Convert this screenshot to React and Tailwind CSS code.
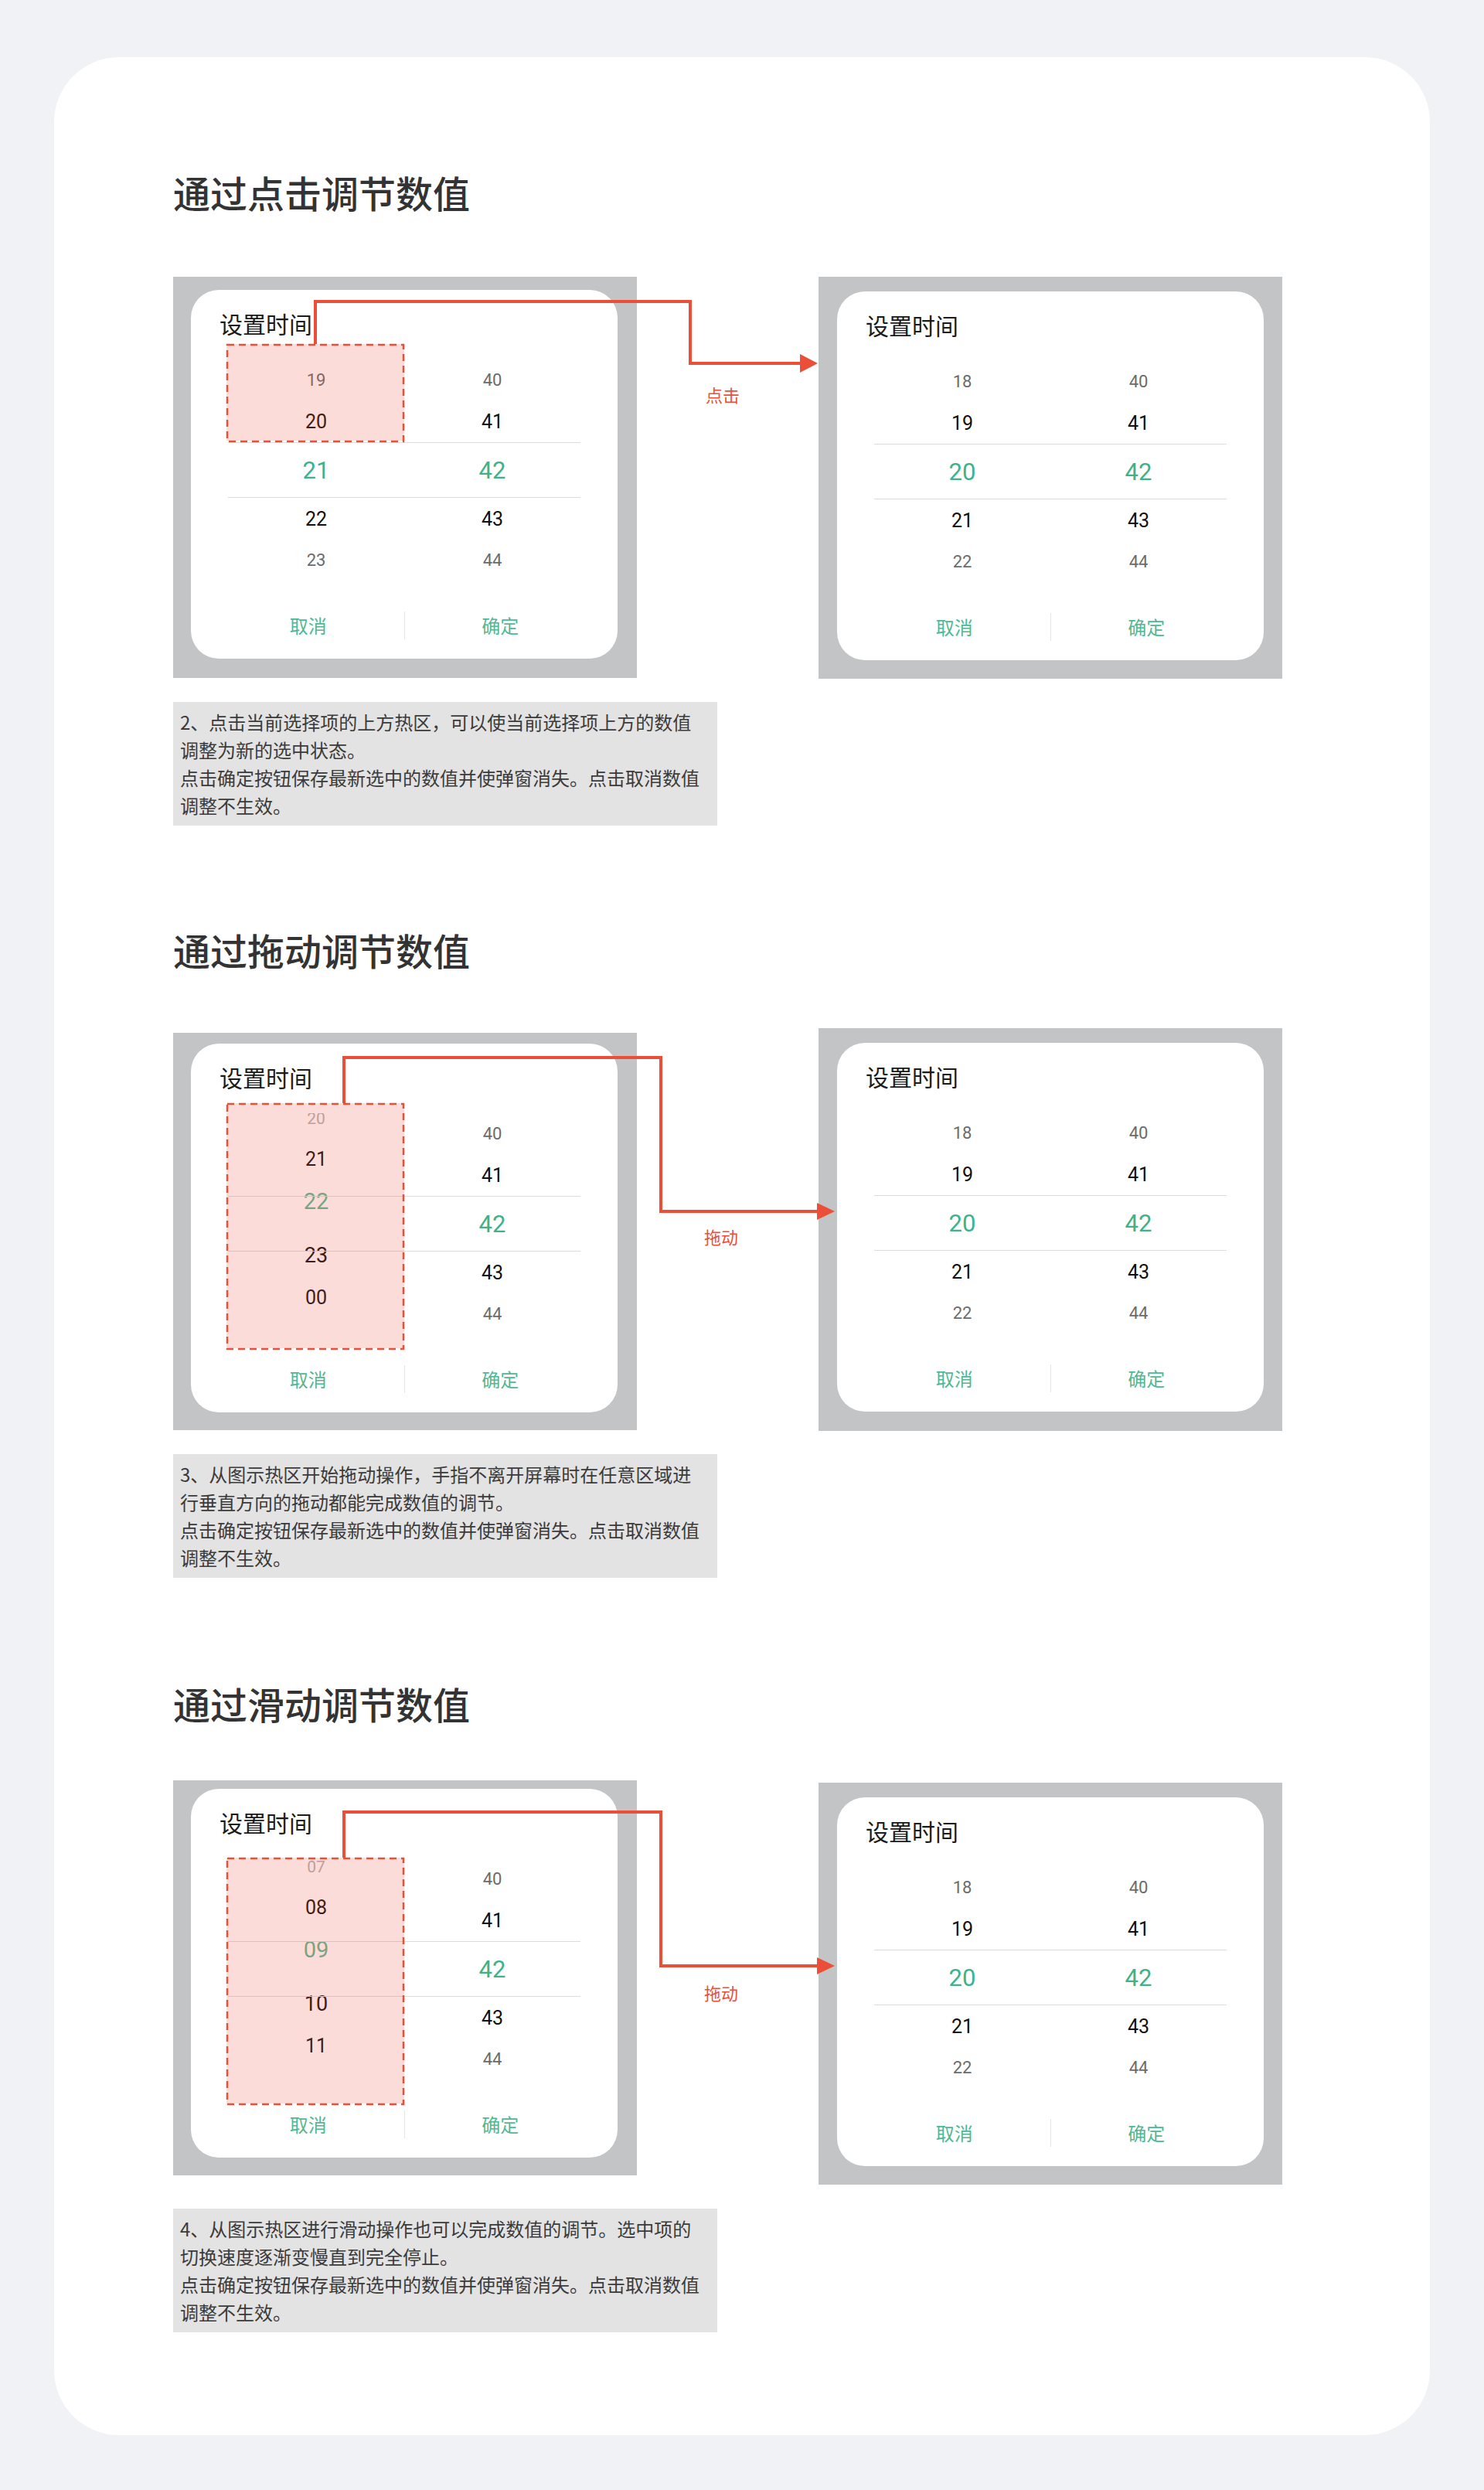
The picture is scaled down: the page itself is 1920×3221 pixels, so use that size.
import React from 'react';

const CJK = "font-['Noto_Sans_CJK_SC','Noto_Sans',sans-serif]";
const NUM = "font-['Roboto','Noto_Sans_CJK_SC',sans-serif]";

const tones = {
    far: 'text-[22px] text-[#6b6b6b]',
    near: 'text-[25px] text-[#111111]',
    sel: 'text-[31px] text-[#40b28a]',
    faint: 'text-[21px] text-[#b3b3b3]',
    big: 'text-[27px] text-[#111111]',
    selSoft: 'text-[29px] text-[#5cba95]',
};

const rowHeights = ['h-[54px]', 'h-[53px]', 'h-[72px]', 'h-[54px]', 'h-[54px]'];
const rowTones = ['far', 'near', 'sel', 'near', 'far'];

const wheel = (values) => values.map((v, i) => ({ v, tone: rowTones[i], h: rowHeights[i] }));

const minutes = wheel(['40', '41', '42', '43', '44']);

const sections = [
    {
        title: '通过点击调节数值',
        titleMt: '',
        rowMt: 'mt-[82px]',
        left: {
            box: 'pt-[17px] h-[519px]',
            hot: 'top-[70px] h-[125px]',
            shift: '',
            hours: wheel(['19', '20', '21', '22', '23']),
        },
        right: { box: 'pt-[19px] h-[520px]' },
        label: '点击',
        line: '184,87 184,32 669,32 669,112 813,112',
        head: '811,100 834,112 811,124',
        labelPos: 'left-[711px] top-[152px]',
        descMt: 'mt-[30px]',
        desc: [
            '2、点击当前选择项的上方热区，可以使当前选择项上方的数值',
            '调整为新的选中状态。',
            '点击确定按钮保存最新选中的数值并使弹窗消失。点击取消数值',
            '调整不生效。',
        ],
    },
    {
        title: '通过拖动调节数值',
        titleMt: 'mt-[132px]',
        rowMt: 'mt-[74px]',
        left: {
            box: 'mt-[6px] pt-[14px] h-[514px]',
            hot: 'top-[77px] h-[317px]',
            shift: '-mt-[16px]',
            hours: [
                { v: '20', tone: 'faint', h: 'h-[46px]' },
                { v: '21', tone: 'near', h: 'h-[58px]' },
                { v: '22', tone: 'selSoft', h: 'h-[52px]' },
                { v: '23', tone: 'big', h: 'h-[88px]' },
                { v: '00', tone: 'near', h: 'h-[20px]' },
            ],
        },
        right: { box: 'pt-[19px] h-[521px]' },
        label: '拖动',
        line: '221,97 221,38 631,38 631,237 835,237',
        head: '833,226 856,237 833,248',
        labelPos: 'left-[709px] top-[269px]',
        descMt: 'mt-[30px]',
        desc: [
            '3、从图示热区开始拖动操作，手指不离开屏幕时在任意区域进',
            '行垂直方向的拖动都能完成数值的调节。',
            '点击确定按钮保存最新选中的数值并使弹窗消失。点击取消数值',
            '调整不生效。',
        ],
    },
    {
        title: '通过滑动调节数值',
        titleMt: 'mt-[134px]',
        rowMt: 'mt-[72px]',
        left: {
            box: 'pt-[11px] h-[511px]',
            hot: 'top-[89px] h-[318px]',
            shift: '-mt-[12px]',
            hours: [
                { v: '07', tone: 'faint', h: 'h-[46px]' },
                { v: '08', tone: 'near', h: 'h-[58px]' },
                { v: '09', tone: 'selSoft', h: 'h-[52px]' },
                { v: '10', tone: 'big', h: 'h-[88px]' },
                { v: '11', tone: 'near', h: 'h-[20px]' },
            ],
        },
        right: { box: 'mt-[3px] pt-[19px] h-[520px]' },
        label: '拖动',
        line: '221,100 221,41 631,41 631,240 835,240',
        head: '833,229 856,240 833,251',
        labelPos: 'left-[709px] top-[274px]',
        descMt: 'mt-[31px]',
        desc: [
            '4、从图示热区进行滑动操作也可以完成数值的调节。选中项的',
            '切换速度逐渐变慢直到完全停止。',
            '点击确定按钮保存最新选中的数值并使弹窗消失。点击取消数值',
            '调整不生效。',
        ],
    },
];

function Column({ items, shift = '' }) {
    return (
        <div className="w-[228px] h-full overflow-hidden">
            <div className={`flex flex-col ${shift}`}>
                {items.map((item, i) => (
                    <div key={i} className={`${item.h} shrink-0 flex items-center justify-center leading-none ${NUM} ${tones[item.tone]}`}>
                        {item.v}
                    </div>
                ))}
            </div>
        </div>
    );
}

function TimeDialog({ hours, shift, hot }) {
    return (
        <div className="relative w-[552px] h-[477px] rounded-[36px] bg-white">
            <div className={`pt-[25px] pl-[37px] text-[30px] leading-[36px] text-[#1b1b1b] ${CJK}`}>设置时间</div>

            <div className="relative mt-[29px] mx-[48px] h-[287px] flex">
                <div className="absolute inset-x-0 top-[107px] h-[72px] border-y border-[#dcdcdc]"></div>
                <Column items={hours} shift={shift} />
                <Column items={minutes} />
            </div>

            <div className={`mt-[39px] px-[28px] h-[36px] flex items-center text-[24px] text-[#4fb894] ${CJK}`}>
                <div className="flex-1 text-center">取消</div>
                <div className="w-px h-full bg-[#e6e6e6]"></div>
                <div className="flex-1 text-center">确定</div>
            </div>

            {hot && (
                <div className={`absolute left-[46px] w-[230px] ${hot} bg-[#f0503c]/20 z-10`}>
                    <svg className="absolute inset-0 w-full h-full overflow-visible">
                        <rect x="1" y="1" width="228" height="100%" fill="none" stroke="#e8503a" strokeWidth="2.5" strokeDasharray="9 6" />
                    </svg>
                </div>
            )}
        </div>
    );
}

function Section({ s }) {
    return (
        <section>
            <h2 className={`${s.titleMt} text-[48px] leading-[56px] font-medium text-[#333333] ${CJK}`}>{s.title}</h2>

            <div className={`relative ${s.rowMt} flex items-start gap-[235px]`}>
                <div className={`w-[600px] pl-[23px] bg-[#c2c4c6] ${s.left.box}`}>
                    <TimeDialog hours={s.left.hours} shift={s.left.shift} hot={s.left.hot} />
                </div>
                <div className={`w-[600px] pl-[24px] bg-[#c2c4c6] ${s.right.box}`}>
                    <TimeDialog hours={wheel(['18', '19', '20', '21', '22'])} />
                </div>

                {/* connector from the hot zone to the resulting dialog */}
                <svg className="absolute left-0 top-0 z-20 pointer-events-none overflow-visible" width="900" height="300">
                    <polyline points={s.line} fill="none" stroke="#ec4f37" strokeWidth="4" strokeLinejoin="miter" />
                    <polygon points={s.head} fill="#ec4f37" />
                </svg>
                <div className={`absolute ${s.labelPos} -translate-x-1/2 -translate-y-1/2 text-[22px] leading-none text-[#ec4f37] ${CJK}`}>
                    {s.label}
                </div>
            </div>

            <div className={`${s.descMt} w-[704px] px-[9px] py-[8px] bg-[#e3e3e3] text-[24px] leading-[36px] text-[#3b3b3b] ${CJK}`}>
                {s.desc.map((line, i) => (
                    <div key={i} className="whitespace-nowrap">{line}</div>
                ))}
            </div>
        </section>
    );
}

export default function App() {
    return (
        <div className="min-h-[3221px] bg-[#f0f2f5] pt-[74px] px-[70px] pb-[73px]">
            <div className="w-[1780px] rounded-[84px] bg-white pt-[146px] pb-[133px] pl-[154px]">
                {sections.map((s) => (
                    <Section key={s.title} s={s} />
                ))}
            </div>
        </div>
    );
}
